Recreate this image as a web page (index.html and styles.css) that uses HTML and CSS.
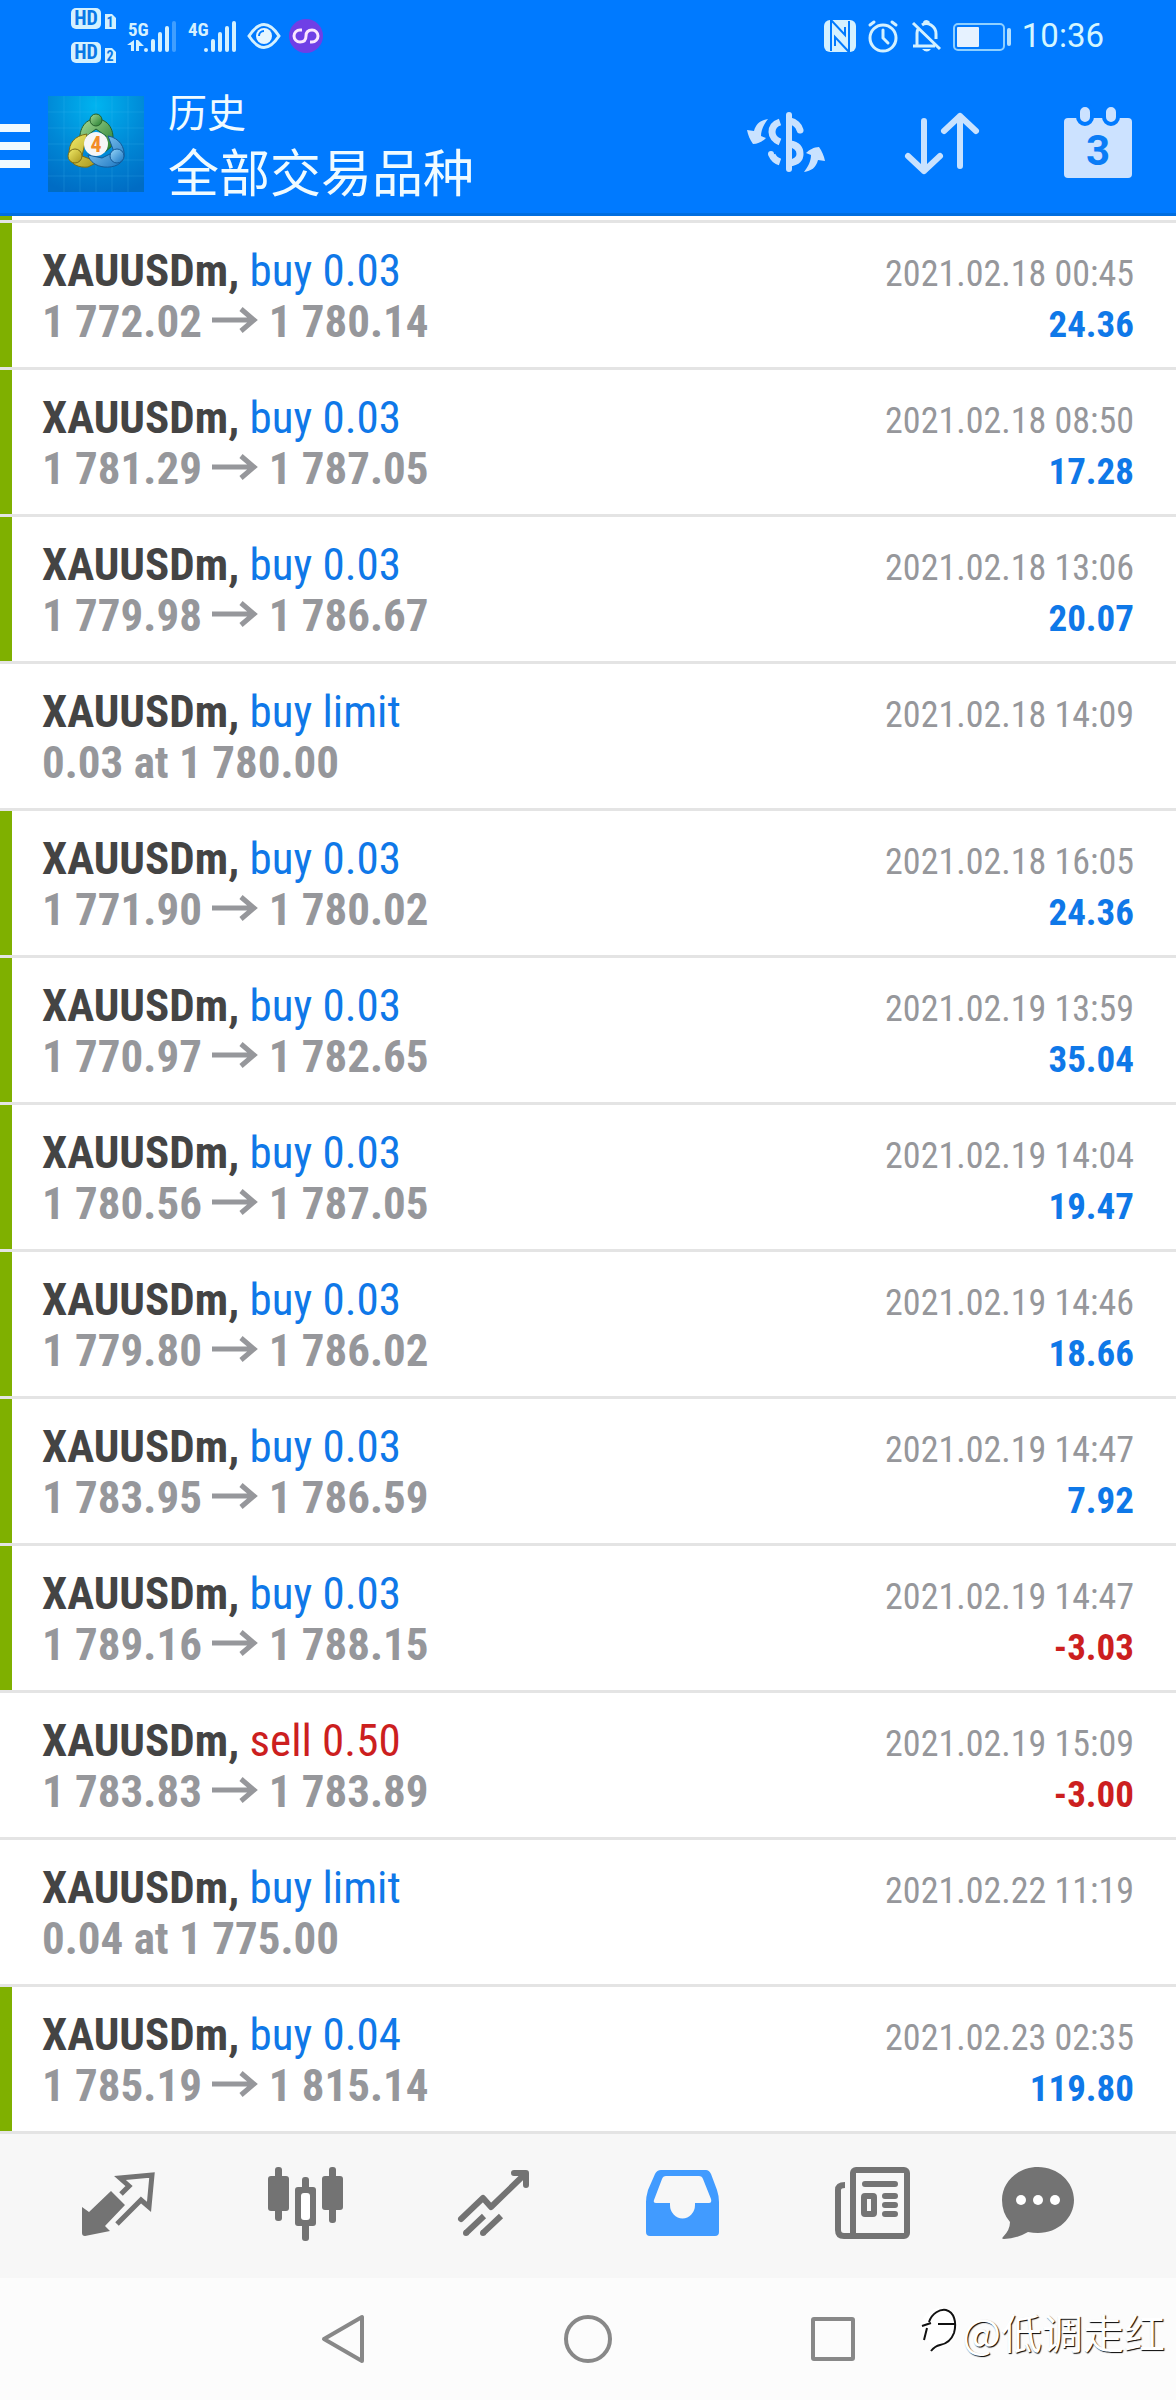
FILE: index.html
```html
<!DOCTYPE html>
<html lang="zh-CN">
<head>
<meta charset="utf-8">
<meta name="viewport" content="width=device-width, initial-scale=1">
<title>历史 - 全部交易品种</title>
<link rel="stylesheet" href="styles.css">
</head>
<body>
<svg class="defs" aria-hidden="true">
  <symbol id="arrow" viewBox="0 0 46 26">
    <path d="M0 13H42M29 2L42 13 29 24" fill="none" stroke="currentColor" stroke-width="5"/>
  </symbol>
</svg>

<header class="top">
  <div class="status">
    <div class="status-group status-left">
      <svg class="hd" width="48" height="60" viewBox="0 0 48 60" aria-hidden="true">
        <g fill="#d4f1ff">
          <rect x="0" y="2" width="30" height="21" rx="5"/>
          <path d="M34 8H41L45 12V23H34Z"/>
          <rect x="0" y="36" width="30" height="21" rx="5"/>
          <path d="M34 42H41L45 46V57H34Z"/>
        </g>
        <g class="hd-text">
          <text x="15" y="19" font-size="20">HD</text>
          <text x="39" y="21" font-size="14">1</text>
          <text x="15" y="53" font-size="20">HD</text>
          <text x="39" y="55" font-size="14">2</text>
        </g>
      </svg>
      <svg width="52" height="40" viewBox="1 -2 52 40" aria-hidden="true">
        <text class="net" x="2" y="18">5G</text>
        <path fill="#d4f1ff" d="M8 22V33H5V27H1ZM10 33V22H12L18 28H13V33Z"/>
        <g stroke="#d4f1ff" stroke-width="4" stroke-linecap="round">
          <path d="M20 32V32M27 32V23M34 32V16M41 32V10"/>
          <path d="M48 32V5" opacity=".3"/>
        </g>
      </svg>
      <svg width="52" height="40" viewBox="1 -2 52 40" aria-hidden="true">
        <text class="net" x="2" y="18">4G</text>
        <path stroke="#d4f1ff" stroke-width="4" stroke-linecap="round" d="M20 32V32M27 32V23M34 32V16M41 32V10M48 32V5"/>
      </svg>
      <svg width="34" height="36" viewBox="0 0 34 36" aria-hidden="true">
        <path d="M2 18Q17-5 32 18Q17 41 2 18Z" fill="none" stroke="#d4f1ff" stroke-width="3"/>
        <circle cx="17" cy="18" r="8" fill="#e6f6ff"/>
        <path d="M12 18A5 5 0 0 1 17 13" fill="none" stroke="#007aff" stroke-width="2"/>
      </svg>
      <svg width="34" height="36" viewBox="0 0 34 36" aria-hidden="true">
        <circle cx="17" cy="18" r="17" fill="#6f3fe6"/>
        <path d="M13 12H11A6 6 0 0 0 11 24Q17 24 17 18T23 12A6 6 0 0 1 23 24H21" fill="none" stroke="#fbe6ff" stroke-width="3"/>
      </svg>
    </div>
    <div class="status-group status-right">
      <svg width="32" height="36" viewBox="0 0 32 36" aria-hidden="true">
        <rect x="0" y="2" width="32" height="32" rx="6" fill="#d4f1ff"/>
        <path d="M7 2L21 17V9M25 34L11 19V28M7 2V33M25 34V3" fill="none" stroke="#007aff" stroke-width="2"/>
      </svg>
      <svg width="32" height="36" viewBox="0 0 32 36" aria-hidden="true">
        <g fill="none" stroke="#d4f1ff" stroke-width="3" stroke-linecap="round">
          <circle cx="16" cy="20" r="13"/>
          <path d="M16 12V20L21 25M3 7L7 4M29 7L25 4"/>
        </g>
      </svg>
      <svg width="32" height="36" viewBox="0 0 32 36" aria-hidden="true">
        <g fill="none" stroke="#d4f1ff" stroke-width="3">
          <path d="M3 5L30 31M3 28H25M7 27V15Q7 12 9 10M12 7Q16 4 21 7Q26 10 26 16V21M14 5Q16 2 19 5"/>
        </g>
        <path d="M12 31H21Q17 36 12 31Z" fill="#d4f1ff"/>
      </svg>
      <svg width="58" height="36" viewBox="0 0 58 36" aria-hidden="true">
        <rect x="1" y="6" width="50" height="26" rx="4" fill="none" stroke="#8fd0ff" stroke-width="2"/>
        <rect x="4" y="9" width="22" height="20" rx="1" fill="#e6f2ff"/>
        <rect x="54" y="10" width="4" height="18" rx="2" fill="#b4e0ff"/>
      </svg>
      <time class="clock">10:36</time>
    </div>
  </div>

  <div class="bar">
    <button class="menu" type="button" aria-label="菜单"><span></span><span></span><span></span></button>
    <svg class="logo" viewBox="0 0 96 96" aria-hidden="true">
      <defs>
        <radialGradient id="sky" cx=".5" cy=".1" r=".95"><stop offset="0" stop-color="#00b4f0"/><stop offset=".55" stop-color="#0088d6"/><stop offset="1" stop-color="#006cc4"/></radialGradient>
        <linearGradient id="gr" x2="1" y2="1"><stop offset="0" stop-color="#a8dc98"/><stop offset="1" stop-color="#1f7a2c"/></linearGradient>
        <linearGradient id="ye" x2="1" y2="1"><stop offset="0" stop-color="#f2ec6a"/><stop offset="1" stop-color="#a89418"/></linearGradient>
        <linearGradient id="bl" x2="1" y2="1"><stop offset="0" stop-color="#9ad8fa"/><stop offset="1" stop-color="#1672c0"/></linearGradient>
      </defs>
      <rect width="96" height="96" fill="url(#sky)"/>
      <path d="M16 0V96M32 0V96M48 0V96M64 0V96M80 0V96M0 16H96M0 32H96M0 48H96M0 64H96M0 80H96" stroke="#4cc0f4" stroke-opacity=".2"/>
      <path d="M32 50C30 34 36 23 48 23S68 34 64 50L57 56 58 40 48 33 40 39Z" fill="url(#gr)" stroke="#24602a"/>
      <path d="M39 38C26 40 21 47 21 58S32 72 40 71L50 66 34 60Z" fill="url(#ye)" stroke="#7a6c14"/>
      <path d="M60 40C72 42 77 52 76 60S66 72 56 71C48 70 42 66 40 59L54 62 66 56Z" fill="url(#bl)" stroke="#145a98"/>
      <circle cx="48" cy="24" r="6" fill="url(#gr)" stroke="#24602a"/>
      <circle cx="27" cy="60" r="7" fill="url(#ye)" stroke="#7a6c14"/>
      <circle cx="69" cy="60" r="7" fill="url(#bl)" stroke="#145a98"/>
      <circle cx="48" cy="48" r="12" fill="#f6f6f6"/>
      <text class="logo-num" x="48" y="56">4</text>
    </svg>
    <h1 class="title"><span class="title-page">历史</span><span class="title-filter">全部交易品种</span></h1>
    <div class="actions">
      <button class="action" type="button" aria-label="交易品种">
        <svg width="84" height="84" viewBox="0 0 84 84" aria-hidden="true">
          <g fill="none" stroke="#c9e2ff" stroke-width="7">
            <path d="M45 13V67" stroke-width="6" stroke-linecap="round"/>
            <path d="M46 19C51 20 55 24 56 28" stroke-linecap="round"/>
            <path d="M36 20C30 22 28 26 28 30S31 38 36 40M46 42C53 43 56 47 56 52S52 60 46 61M28 53Q30 58 36 60"/>
          </g>
          <circle cx="27" cy="52" r="3" fill="#c9e2ff"/>
          <path fill="#c9e2ff" d="M24 17C17 18 12 21 10 29L3 28C4 33 6 38 9 42C14 42 19 39 22 36L17 34C17 28 20 22 24 17ZM60 70C67 69 72 66 74 58L81 59C80 54 78 49 75 45C70 45 65 48 62 51L67 53C67 59 64 65 60 70Z"/>
        </svg>
      </button>
      <button class="action" type="button" aria-label="排序">
        <svg width="84" height="84" viewBox="0 0 84 84" aria-hidden="true">
          <path d="M24 19V69M8 54L24 69 40 54M60 64V14M44 29L60 14 76 29" fill="none" stroke="#c9e2ff" stroke-width="6" stroke-linecap="round" stroke-linejoin="round"/>
        </svg>
      </button>
      <button class="action" type="button" aria-label="期间">
        <svg width="84" height="84" viewBox="0 0 84 84" aria-hidden="true">
          <rect x="8" y="16" width="68" height="60" rx="4" fill="#cce2ff"/>
          <g fill="#cce2ff" stroke="#007aff" stroke-width="4">
            <rect x="22" y="3" width="14" height="19" rx="7"/>
            <rect x="48" y="3" width="14" height="19" rx="7"/>
          </g>
          <text class="cal-num" x="42" y="63">3</text>
        </svg>
      </button>
    </div>
  </div>
</header>

<main>
  <ul class="deals">
    <li class="deal closed">
      <span class="name">XAUUSDm, <span class="buy">buy 0.03</span></span><time class="date">2021.02.18 00:45</time>
      <span class="price">1 772.02 <svg class="to"><use href="#arrow"/></svg> 1 780.14</span><span class="profit">24.36</span>
    </li>
    <li class="deal closed">
      <span class="name">XAUUSDm, <span class="buy">buy 0.03</span></span><time class="date">2021.02.18 08:50</time>
      <span class="price">1 781.29 <svg class="to"><use href="#arrow"/></svg> 1 787.05</span><span class="profit">17.28</span>
    </li>
    <li class="deal closed">
      <span class="name">XAUUSDm, <span class="buy">buy 0.03</span></span><time class="date">2021.02.18 13:06</time>
      <span class="price">1 779.98 <svg class="to"><use href="#arrow"/></svg> 1 786.67</span><span class="profit">20.07</span>
    </li>
    <li class="deal">
      <span class="name">XAUUSDm, <span class="buy">buy limit</span></span><time class="date">2021.02.18 14:09</time>
      <span class="price">0.03 at 1 780.00</span>
    </li>
    <li class="deal closed">
      <span class="name">XAUUSDm, <span class="buy">buy 0.03</span></span><time class="date">2021.02.18 16:05</time>
      <span class="price">1 771.90 <svg class="to"><use href="#arrow"/></svg> 1 780.02</span><span class="profit">24.36</span>
    </li>
    <li class="deal closed">
      <span class="name">XAUUSDm, <span class="buy">buy 0.03</span></span><time class="date">2021.02.19 13:59</time>
      <span class="price">1 770.97 <svg class="to"><use href="#arrow"/></svg> 1 782.65</span><span class="profit">35.04</span>
    </li>
    <li class="deal closed">
      <span class="name">XAUUSDm, <span class="buy">buy 0.03</span></span><time class="date">2021.02.19 14:04</time>
      <span class="price">1 780.56 <svg class="to"><use href="#arrow"/></svg> 1 787.05</span><span class="profit">19.47</span>
    </li>
    <li class="deal closed">
      <span class="name">XAUUSDm, <span class="buy">buy 0.03</span></span><time class="date">2021.02.19 14:46</time>
      <span class="price">1 779.80 <svg class="to"><use href="#arrow"/></svg> 1 786.02</span><span class="profit">18.66</span>
    </li>
    <li class="deal closed">
      <span class="name">XAUUSDm, <span class="buy">buy 0.03</span></span><time class="date">2021.02.19 14:47</time>
      <span class="price">1 783.95 <svg class="to"><use href="#arrow"/></svg> 1 786.59</span><span class="profit">7.92</span>
    </li>
    <li class="deal closed">
      <span class="name">XAUUSDm, <span class="buy">buy 0.03</span></span><time class="date">2021.02.19 14:47</time>
      <span class="price">1 789.16 <svg class="to"><use href="#arrow"/></svg> 1 788.15</span><span class="profit loss">-3.03</span>
    </li>
    <li class="deal">
      <span class="name">XAUUSDm, <span class="sell">sell 0.50</span></span><time class="date">2021.02.19 15:09</time>
      <span class="price">1 783.83 <svg class="to"><use href="#arrow"/></svg> 1 783.89</span><span class="profit loss">-3.00</span>
    </li>
    <li class="deal">
      <span class="name">XAUUSDm, <span class="buy">buy limit</span></span><time class="date">2021.02.22 11:19</time>
      <span class="price">0.04 at 1 775.00</span>
    </li>
    <li class="deal closed">
      <span class="name">XAUUSDm, <span class="buy">buy 0.04</span></span><time class="date">2021.02.23 02:35</time>
      <span class="price">1 785.19 <svg class="to"><use href="#arrow"/></svg> 1 815.14</span><span class="profit">119.80</span>
    </li>
  </ul>
</main>

<nav class="tabs">
  <a class="tab" href="#quotes" aria-label="行情">
    <svg width="84" height="84" viewBox="0 0 84 84" aria-hidden="true">
      <path d="M45 30L53 22 44 14 76 11 73 43 65 36 41 60" fill="none" stroke="currentColor" stroke-width="5"/>
      <path d="M35 27L49 41 29 62 34 67 9 72Q6 72 6 69V43L13 48Z" fill="currentColor"/>
    </svg>
  </a>
  <a class="tab" href="#charts" aria-label="图表">
    <svg width="84" height="84" viewBox="0 0 84 84" aria-hidden="true">
      <g fill="currentColor">
        <rect x="11" y="3" width="7" height="54" rx="3"/><rect x="4" y="12" width="21" height="35" rx="3"/>
        <rect x="38" y="13" width="7" height="64" rx="3"/><rect x="31" y="23" width="21" height="39" rx="3"/>
        <rect x="65" y="3" width="7" height="56" rx="3"/><rect x="58" y="12" width="21" height="34" rx="3"/>
      </g>
      <rect x="37" y="29" width="9" height="27" rx="3" fill="#fff"/>
    </svg>
  </a>
  <a class="tab" href="#trade" aria-label="交易">
    <svg width="84" height="84" viewBox="0 0 84 84" aria-hidden="true">
      <g fill="none" stroke="currentColor" stroke-width="6">
        <path d="M9 55L31 34 39 43 73 10M62 9H74V21" stroke-linecap="round" stroke-linejoin="round"/>
        <path d="M14 69L32 52M31 69L49 52"/>
      </g>
      <circle cx="14" cy="69" r="3" fill="currentColor"/><circle cx="31" cy="69" r="3" fill="currentColor"/>
    </svg>
  </a>
  <a class="tab current" href="#history" aria-label="历史" aria-current="page">
    <svg width="84" height="84" viewBox="0 0 84 84" aria-hidden="true">
      <path fill="currentColor" fill-rule="evenodd" d="M21 6H66Q69 6 71 10L77 26Q79 32 79 38V68Q79 72 75 72H10Q6 72 6 68V38Q6 33 8 26L15 10Q17 6 21 6ZM26 12H59Q62 12 63 15L71 35Q72 39 69 39H55V41A12 13 0 0 1 30 41V39H16Q13 39 14 36L22 15Q23 12 26 12Z"/>
    </svg>
  </a>
  <a class="tab" href="#news" aria-label="新闻">
    <svg width="84" height="84" viewBox="0 0 84 84" aria-hidden="true">
      <g fill="none" stroke="currentColor" stroke-width="6">
        <rect x="25" y="6" width="54" height="66" rx="3"/>
        <path d="M17 21Q10 21 10 26V66Q10 72 16 72H28"/>
        <rect x="36" y="32" width="10" height="18" rx="1"/>
        <path d="M37 20H67M57 32H67M57 41H67M57 50H67" stroke-linecap="round"/>
      </g>
    </svg>
  </a>
  <a class="tab" href="#chat" aria-label="聊天">
    <svg width="84" height="84" viewBox="0 0 84 84" aria-hidden="true">
      <path fill="currentColor" d="M42 3C62 3 78 18 78 36S62 69 42 69Q37 69 32 68Q20 75 8 75Q5 75 7 73Q14 66 14 58Q6 49 6 36C6 18 22 3 42 3Z"/>
      <circle cx="25" cy="36" r="5" fill="#fff"/><circle cx="42" cy="36" r="5" fill="#fff"/><circle cx="59" cy="36" r="5" fill="#fff"/>
    </svg>
  </a>
</nav>

<footer class="system">
  <div class="keys">
    <button class="key" type="button" aria-label="返回"><svg width="54" height="54" viewBox="0 0 54 54"><path d="M8 27L46 5V49Z"/></svg></button>
    <button class="key" type="button" aria-label="主屏幕"><svg width="54" height="54" viewBox="0 0 54 54"><circle cx="27" cy="27" r="22"/></svg></button>
    <button class="key" type="button" aria-label="最近任务"><svg width="54" height="54" viewBox="0 0 54 54"><rect x="7" y="7" width="40" height="40" rx="1"/></svg></button>
  </div>
  <p class="mark">
    <svg width="40" height="52" viewBox="0 0 40 52" aria-hidden="true">
      <circle cx="20" cy="22" r="19" fill="#fff"/>
      <path d="M9 17C12 8 20 4 26 5C34 7 37 17 34 28C31 36 26 39 20 40Q15 41 11 46M18 19H36M2 21L11 18M7 23L4 35" fill="none" stroke="#111" stroke-width="2"/>
    </svg>
    <span>@低调走红</span>
  </p>
</footer>
</body>
</html>
```
FILE: styles.css
```css
* {
  box-sizing: border-box;
}

body {
  margin: 0;
  background: #fff;
  font-family: "Roboto Condensed", Roboto, sans-serif;
}

button {
  padding: 0;
  border: 0;
  background: none;
  color: inherit;
  font: inherit;
}

svg {
  display: block;
  flex: none;
}

.defs {
  position: absolute;
  width: 0;
  height: 0;
}

/* Header */
.top {
  background: #007aff;
  border-bottom: 3px solid #006ee0;
  color: #f0fbff;
}

.status {
  display: flex;
  justify-content: space-between;
  height: 72px;
  padding: 0 72px 0 71px;
}

.status-group {
  display: flex;
  align-items: center;
}

.status-left {
  gap: 8px;
}

.status-right {
  gap: 11px;
}

.hd-text {
  fill: #0a78e6;
  font-weight: 700;
  text-anchor: middle;
}

.net {
  fill: #d4f1ff;
  font-size: 19px;
  font-weight: 700;
}

.clock {
  font-family: Roboto, sans-serif;
  font-size: 33px;
  line-height: 40px;
  color: #d4f6ff;
}

.bar {
  display: flex;
  align-items: center;
  height: 141px;
  padding-top: 3px;
}

.menu {
  display: flex;
  flex-direction: column;
  gap: 10px;
  width: 30px;
  margin-right: 18px;
  padding-top: 4px;
}

.menu span {
  height: 8px;
  background: #f0faff;
}

.logo {
  width: 96px;
  height: 96px;
}

.logo-num {
  fill: #f28c28;
  font-size: 22px;
  font-weight: 700;
  text-anchor: middle;
}

.title {
  display: flex;
  flex: 1;
  flex-direction: column;
  margin: 0;
  padding: 0 0 4px 24px;
  font-family: "Noto Sans CJK SC", sans-serif;
  font-weight: 400;
}

.title-page {
  font-size: 39px;
  line-height: 56px;
}

.title-filter {
  font-size: 51px;
  line-height: 64px;
}

.actions {
  display: flex;
}

.action {
  display: flex;
  justify-content: center;
  width: 156px;
}

.cal-num {
  fill: #0a7cf6;
  font-family: Roboto, sans-serif;
  font-size: 42px;
  font-weight: 700;
  text-anchor: middle;
}

/* Deal list */
.deals {
  margin: 0;
  padding: 0;
  list-style: none;
}

/* Tail of the row scrolled under the header */
.deals::before {
  content: "";
  display: block;
  height: 4px;
  border-bottom: 3px solid #e4e4e4;
  box-shadow: inset 12px 0 #7fb000;
}

.deal {
  display: grid;
  grid-template-columns: 1fr auto;
  grid-template-rows: 51px 51px;
  align-items: baseline;
  padding: 22px 42px 20px;
  border-bottom: 3px solid #e4e4e4;
  line-height: 51px;
}

.closed {
  box-shadow: inset 12px 0 #7fb000;
}

.name,
.price {
  font-size: 45px;
  font-weight: 700;
}

.name {
  color: #444;
}

.buy,
.sell {
  font-weight: 400;
}

.buy {
  color: #0f78e8;
}

.sell {
  color: #cc1f1f;
}

.price {
  color: #96979b;
}

.to {
  display: inline-block;
  width: 46px;
  height: 26px;
  vertical-align: 4px;
}

.date,
.profit {
  text-align: right;
}

.date {
  color: #96979b;
  font-size: 36px;
}

.profit {
  color: #0f78e8;
  font-size: 37px;
  font-weight: 700;
}

.loss {
  color: #cc1f1f;
}

/* Bottom tabs */
.tabs {
  display: grid;
  grid-template-columns: repeat(5, 188fr) 148fr;
  align-items: center;
  height: 144px;
  padding: 0 64px 0 24px;
  background: #f7f7f7;
}

.tab {
  display: flex;
  justify-content: center;
  color: #737373;
}

.current {
  color: #419bff;
}

/* System keys */
.system {
  position: relative;
  height: 122px;
  background: #fcfcfc;
}

.keys {
  display: grid;
  grid-template-columns: repeat(3, 1fr);
  align-items: center;
  max-width: 735px;
  height: 100%;
  margin: 0 auto;
}

.key {
  display: flex;
  justify-content: center;
}

.key svg {
  fill: none;
  stroke: #888;
  stroke-width: 4px;
  stroke-linejoin: round;
}

.mark {
  position: absolute;
  right: 11px;
  bottom: 39px;
  display: flex;
  align-items: center;
  gap: 2px;
  margin: 0;
  color: #fff;
  font-family: "Noto Sans CJK SC", sans-serif;
  font-size: 41px;
  line-height: 60px;
  text-shadow: 1px 1px 1px #000;
}
```
